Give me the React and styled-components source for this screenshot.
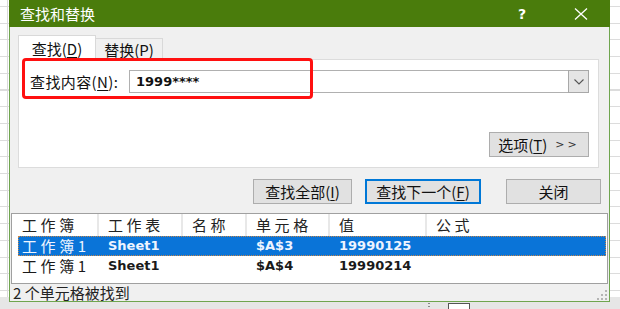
import styled, { createGlobalStyle } from "styled-components";

const CJK = `"Noto Sans CJK SC", "Noto Sans", sans-serif`;
const LATIN = `"DejaVu Sans", "Noto Sans", sans-serif`;

const GlobalStyle = createGlobalStyle`
  html, body {
    margin: 0;
    padding: 0;
  }
  body {
    width: 620px;
    height: 309px;
    overflow: hidden;
    font-family: ${CJK};
    background:
      linear-gradient(to bottom, transparent 297px, #e6e6e6 297px),
      linear-gradient(to right, transparent 7px, #dadada 7px 8px, transparent 8px),
      repeating-linear-gradient(to bottom, #fff 0 6px, #dcdcdc 6px 7px, #fff 7px 16.7px);
  }
  u {
    text-decoration-thickness: 1px;
    text-underline-offset: 2px;
  }
`;

const Screen = styled.div`
  display: flex;
  flex-direction: column;
  width: 620px;
  height: 309px;
`;

const Dialog = styled.div`
  margin-left: 9px;
  width: 601px;
  height: 302px;
  display: flex;
  flex-direction: column;
`;

const TitleBar = styled.div`
  height: 27px;
  flex: none;
  background: #4a7c0c;
  display: flex;
  align-items: center;
  padding-left: 11px;
  color: #fff;
  font-size: 15px;
`;

const Title = styled.div`
  flex: 1;
  line-height: 27px;
`;

const HelpMark = styled.div`
  font-family: ${LATIN};
  font-weight: bold;
  font-size: 14px;
  width: 10px;
  margin-right: 46px;
`;

const CloseIcon = () => (
  <svg width="14" height="12" viewBox="0 0 14 12" style={{ marginRight: 22 }}>
    <path d="M1 0.5 L13 11.5 M13 0.5 L1 11.5" stroke="#fff" strokeWidth="1.3" fill="none" />
  </svg>
);

const Body = styled.div`
  flex: 1;
  display: flex;
  flex-direction: column;
  background: #f0f0f0;
  border: 1px solid #6fa54f;
  border-top: none;
  min-height: 0;
`;

const Tabs = styled.div`
  display: flex;
  align-items: flex-end;
  margin: 8px 0 -1px 8px;
  position: relative;
  z-index: 1;
`;

const Tab = styled.div`
  box-sizing: border-box;
  height: ${(p) => (p.$active ? 25 : 22)}px;
  width: ${(p) => p.$width}px;
  display: flex;
  align-items: center;
  justify-content: center;
  font-size: 15px;
  color: #111;
  background: ${(p) => (p.$active ? "#fff" : "#f0f0f0")};
  border: 1px solid #d9d9d9;
  border-bottom: ${(p) => (p.$active ? "none" : "1px solid #d9d9d9")};
  border-left: ${(p) => (p.$active ? "1px solid #d9d9d9" : "none")};
`;

const Panel = styled.div`
  position: relative;
  box-sizing: border-box;
  height: 110px;
  margin: 0 10px 0 8px;
  background: #fff;
  border: 1px solid #dcdcdc;
  display: flex;
  flex-direction: column;
  padding: 10px 9px 10px 11px;
`;

const Highlight = styled.div`
  position: absolute;
  left: 3px;
  top: -2px;
  width: 291px;
  height: 41px;
  box-sizing: border-box;
  border: 3px solid #ff1010;
  border-radius: 4px;
  z-index: 2;
  pointer-events: none;
`;

const FieldRow = styled.div`
  display: flex;
  align-items: center;
  height: 23px;
`;

const FieldLabel = styled.div`
  width: 99px;
  font-size: 15px;
  letter-spacing: 0.4px;
  color: #111;
  white-space: nowrap;
`;

const Combo = styled.div`
  flex: 1;
  box-sizing: border-box;
  height: 23px;
  border: 1px solid #b0b0b0;
  background: #fff;
  display: flex;
  align-items: center;
`;

const ComboText = styled.div`
  flex: 1;
  padding-left: 6px;
  font-family: ${LATIN};
  font-weight: bold;
  font-size: 13px;
  color: #111;
`;

const ComboButton = styled.div`
  box-sizing: border-box;
  width: 21px;
  height: 23px;
  margin-right: -1px;
  background: #e5e5e5;
  border: 1px solid #a8a8a8;
  display: flex;
  align-items: center;
  justify-content: center;
`;

const Chevron = () => (
  <svg width="10" height="6" viewBox="0 0 10 6">
    <path d="M0.5 0.5 L5 5 L9.5 0.5" stroke="#555" strokeWidth="1.1" fill="none" />
  </svg>
);

const Button = styled.div`
  box-sizing: border-box;
  height: 25px;
  width: ${(p) => p.$width}px;
  margin-left: ${(p) => p.$gap || 0}px;
  display: flex;
  align-items: center;
  justify-content: center;
  font-size: 15px;
  color: #111;
  background: #e1e1e1;
  border: 1px solid ${(p) => (p.$focused ? "#0078d7" : "#adadad")};
  box-shadow: ${(p) => (p.$focused ? "inset 0 0 0 1px #0078d7" : "none")};
  white-space: nowrap;
`;

const OptionsButton = styled(Button)`
  margin-top: auto;
  align-self: flex-end;
`;

const Arrows = styled.span`
  font-family: ${LATIN};
  font-size: 11px;
  margin-left: 8px;
  letter-spacing: 3px;
  color: #333;
`;

const ActionRow = styled.div`
  display: flex;
  justify-content: flex-end;
  margin: 11px 8px 0 0;
`;

const ResultList = styled.div`
  box-sizing: border-box;
  height: 71px;
  margin: 9px 1px 0 1px;
  background: #fff;
  border: 1px solid #a0a0a0;
  display: flex;
  flex-direction: column;
`;

const COLS = "87px 84px 64px 83px 97px 1fr";
const ROW_COLS = "81px 84px 64px 83px 97px 1fr";

const HeaderRow = styled.div`
  display: grid;
  grid-template-columns: ${COLS};
  height: 22px;
  flex: none;
`;

const HeaderCell = styled.div`
  display: flex;
  align-items: center;
  padding-left: ${(p) => (p.$first ? 10 : 9)}px;
  font-size: 15px;
  line-height: 20px;
  letter-spacing: 3.6px;
  color: #222;
  border-right: ${(p) => (p.$last ? "none" : "2px solid #e8e8e8")};
  white-space: nowrap;
`;

const Row = styled.div`
  display: grid;
  grid-template-columns: ${ROW_COLS};
  height: 20px;
  flex: none;
  margin: 0 1px 0 6px;
  background: ${(p) => (p.$selected ? "#0a74d8" : "transparent")};
  color: ${(p) => (p.$selected ? "#eef4ff" : "#1a1a1a")};
  outline: ${(p) => (p.$selected ? "1px dotted #c4864a" : "none")};
  outline-offset: -1px;
`;

const Cell = styled.div`
  display: flex;
  align-items: center;
  padding-left: ${(p) => (p.$first ? 4 : 9)}px;
  white-space: nowrap;
  line-height: 20px;
  font-family: ${(p) => (p.$cjk ? CJK : LATIN)};
  font-size: ${(p) => (p.$cjk ? 15 : 13)}px;
  font-weight: ${(p) => (p.$cjk ? 400 : 700)};
  letter-spacing: ${(p) => (p.$cjk ? 3.6 : 0)}px;
`;

const StatusBar = styled.div`
  flex: 1;
  display: flex;
  align-items: center;
  justify-content: space-between;
  padding: 0 2px 0 3px;
  font-size: 15px;
  line-height: 17px;
  color: #222;
`;

const Grip = () => (
  <svg width="10" height="10" viewBox="0 0 10 10" style={{ alignSelf: "flex-end", marginBottom: 1 }}>
    {[
      [8, 0], [8, 4], [4, 4], [8, 8], [4, 8], [0, 8],
    ].map(([x, y], i) => (
      <rect key={i} x={x} y={y} width="2" height="2" fill="#b4b4b4" />
    ))}
  </svg>
);

const BottomStrip = styled.div`
  height: 7px;
  display: flex;
  align-items: flex-start;
  padding-left: 428px;
  gap: 18px;
`;

const Dots = styled.div`
  width: 2px;
  height: 6px;
  margin-top: 1px;
  background: repeating-linear-gradient(to bottom, #888 0 1px, transparent 1px 3px);
`;

const SheetBox = styled.div`
  box-sizing: border-box;
  width: 22px;
  height: 7px;
  margin-top: 1px;
  border: 1px solid #555;
  border-bottom: none;
  background: #fff;
`;

const headers = ["工作簿", "工作表", "名称", "单元格", "值", "公式"];
const results = [
  { book: "工作簿1", sheet: "Sheet1", name: "", cell: "$A$3", value: "19990125", selected: true },
  { book: "工作簿1", sheet: "Sheet1", name: "", cell: "$A$4", value: "19990214" },
];

const App = () => (
  <>
    <GlobalStyle />
    <Screen>
      <Dialog>
        <TitleBar>
          <Title>查找和替换</Title>
          <HelpMark>?</HelpMark>
          <CloseIcon />
        </TitleBar>
        <Body>
          <Tabs>
            <Tab $active $width={78}>
              查找(<u>D</u>)
            </Tab>
            <Tab $width={67}>
              替换(<u>P</u>)
            </Tab>
          </Tabs>
          <Panel>
            <Highlight />
            <FieldRow>
              <FieldLabel>
                查找内容(<u>N</u>):
              </FieldLabel>
              <Combo>
                <ComboText>1999****</ComboText>
                <ComboButton>
                  <Chevron />
                </ComboButton>
              </Combo>
            </FieldRow>
            <OptionsButton $width={100}>
              选项(<u>T</u>)<Arrows>&gt;&gt;</Arrows>
            </OptionsButton>
          </Panel>
          <ActionRow>
            <Button $width={99}>
              查找全部(<u>I</u>)
            </Button>
            <Button $width={116} $gap={13} $focused>
              查找下一个(<u>F</u>)
            </Button>
            <Button $width={95} $gap={25}>
              关闭
            </Button>
          </ActionRow>
          <ResultList>
            <HeaderRow>
              {headers.map((h, i) => (
                <HeaderCell key={h} $first={i === 0} $last={i === headers.length - 1}>
                  {h}
                </HeaderCell>
              ))}
            </HeaderRow>
            {results.map((r) => (
              <Row key={r.cell} $selected={r.selected}>
                <Cell $first $cjk>
                  {r.book}
                </Cell>
                <Cell>{r.sheet}</Cell>
                <Cell>{r.name}</Cell>
                <Cell>{r.cell}</Cell>
                <Cell>{r.value}</Cell>
                <Cell />
              </Row>
            ))}
          </ResultList>
          <StatusBar>
            <span>2 个单元格被找到</span>
            <Grip />
          </StatusBar>
        </Body>
      </Dialog>
      <BottomStrip>
        <Dots />
        <SheetBox />
      </BottomStrip>
    </Screen>
  </>
);

export default App;
